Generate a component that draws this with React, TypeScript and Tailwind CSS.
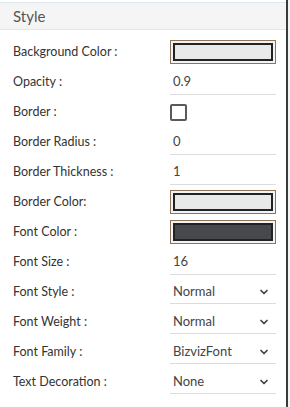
import { ChevronDown } from "lucide-react"

const Swatch = ({ fill }: { fill: string }) => (
  <div className="h-[24px] w-[106px] border border-[#8f735a] bg-[#f3f3f3] p-[2px]">
    <div className={`h-full w-full border-2 border-[#222] ${fill}`} />
  </div>
)

const TextValue = ({ value }: { value: string }) => (
  <div className="flex h-[26px] w-[106px] items-center border-b border-[#dcdcdc] pl-[3px] text-[13px] text-[#444]">
    {value}
  </div>
)

const SelectValue = ({ value }: { value: string }) => (
  <div className="flex h-[24px] w-[106px] items-center justify-between border-b border-[#dcdcdc] pl-[3px] pr-[6px] text-[13px] text-[#444]">
    <span>{value}</span>
    <ChevronDown size={12} strokeWidth={3.5} className="text-[#444]" />
  </div>
)

const rows: { label: string; control: React.ReactNode }[] = [
  { label: "Background Color :", control: <Swatch fill="bg-[#e9e9e9]" /> },
  { label: "Opacity :", control: <TextValue value="0.9" /> },
  {
    label: "Border :",
    control: <div className="h-[17px] w-[17px] rounded-[2px] border-2 border-[#5a5a5a]" />,
  },
  { label: "Border Radius :", control: <TextValue value="0" /> },
  { label: "Border Thickness :", control: <TextValue value="1" /> },
  { label: "Border Color:", control: <Swatch fill="bg-[#e9e9e9]" /> },
  { label: "Font Color :", control: <Swatch fill="bg-[#47484c]" /> },
  { label: "Font Size :", control: <TextValue value="16" /> },
  { label: "Font Style :", control: <SelectValue value="Normal" /> },
  { label: "Font Weight :", control: <SelectValue value="Normal" /> },
  { label: "Font Family :", control: <SelectValue value="BizvizFont" /> },
  { label: "Text Decoration :", control: <SelectValue value="None" /> },
]

export default function App() {
  return (
    <div className="flex h-[407px] w-[290px] bg-[#f1f5f8] font-['Lato',sans-serif]">
      <div className="flex h-full w-[288px] flex-col border-r-2 border-[#3a3a3a] bg-white pt-[2px]">
        <div className="flex h-[28px] items-center border-y border-[#dfe6ee] bg-[#f5f5f6] px-[13px] pt-[1px] text-[15px] text-[#555]">
          Style
        </div>
        <div className="flex flex-col pt-[7px]">
          {rows.map((r) => (
            <div key={r.label} className="flex h-[30px] items-center">
              <div className="w-[170px] pl-[13px] text-[12.5px] text-[#333]">{r.label}</div>
              {r.control}
            </div>
          ))}
        </div>
      </div>
    </div>
  )
}
